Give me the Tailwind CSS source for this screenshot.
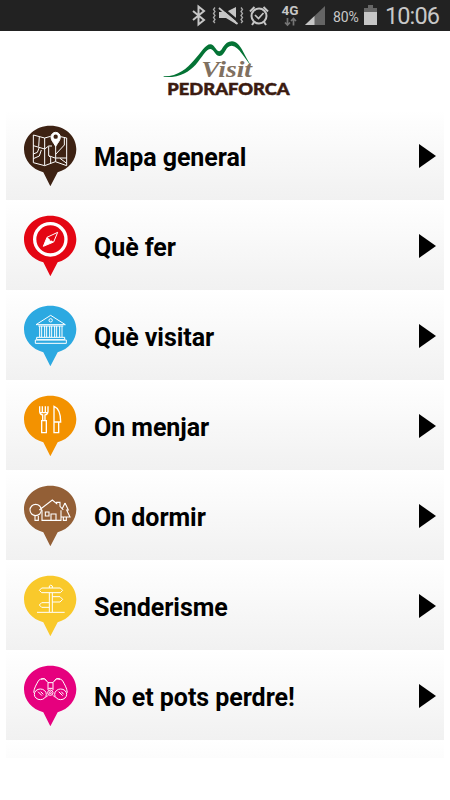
<!DOCTYPE html>
<html lang="ca">
<head>
  <meta charset="UTF-8" />
  <meta name="viewport" content="width=device-width, initial-scale=1.0" />
  <title>Visit Pedraforca</title>
  <script src="https://cdn.jsdelivr.net/npm/@tailwindcss/browser@4"></script>
</head>
<body class="h-screen overflow-hidden bg-white font-[Roboto,sans-serif] text-black">
  <!-- Status bar -->
  <header class="flex h-[31px] items-center bg-[#222222] pl-[190px] text-[#c8c8c8]">
    <svg class="h-[31px] w-[140px] shrink-0" viewBox="190 0 140 31" fill="none" stroke="#c6c6c6">
      <path d="M193 11l11 9-5.500 4.500v-18l5.500 4.500-11 9" stroke-width="2" />
      <path d="M215 7.500l-1.500 2 1.500 2-1.500 2 1.500 2-1.500 2 1.500 2-1.500 2 1.500 1.500M241 7.500l1.500 2-1.500 2 1.500 2-1.500 2 1.500 2-1.500 2 1.500 2-1.500 1.500" stroke="#aaaaaa" stroke-width="1.300" />
      <path d="M219 12h7l10-5v17l-10-6h-7z" fill="#c6c6c6" stroke="none" />
      <path d="M221 7l18 15" stroke="#222222" stroke-width="2.500" />
      <path d="M219 8l18.500 16" stroke-width="1.800" />
      <circle cx="259" cy="16" r="7.500" stroke-width="2" />
      <path d="M250 11.500l4.500-4.500M268 11.500l-4.500-4.500M254 22l-2 3M264 22l2 3" stroke-width="2" />
      <path d="M255 15l3.500 3.500 5-5.500" stroke-width="1.700" />
      <text x="281.500" y="14.500" font-size="13.500" font-weight="700" textLength="17" lengthAdjust="spacingAndGlyphs" fill="#c6c6c6" stroke="none">4G</text>
      <path d="M287.500 18v7M285 22.500l2.500 2.500 2.500-2.500M293.500 25.500v-7M291 21l2.500-2.500 2.500 2.500" stroke="#757575" stroke-width="1.700" />
      <path d="M325 6v19h-20z" fill="#656565" stroke="none" />
      <path d="M314.500 16v9h-9.500z" fill="#c6c6c6" stroke="none" />
    </svg>
    <span class="ml-[3px] w-[28px] pt-[3px] text-[14px] tracking-[-0.1px] whitespace-nowrap">80%</span>
    <svg class="ml-[3px] h-[31px] w-[13px] shrink-0" viewBox="0 0 13 31">
      <path d="M4 5h5v3h4v4h-13v-4h4z" fill="#666666" />
      <path d="M0 12h13v13h-13z" fill="#c6c6c6" />
    </svg>
    <span class="ml-[8px] pt-[3px] text-[23.500px] leading-none tracking-[-0.9px] whitespace-nowrap">10:06</span>
  </header>

  <!-- Logo -->
  <div class="flex h-[79px] pl-[155px]">
    <svg class="mt-px h-[70px] w-[145px]" viewBox="0 0 435 210">
      <path d="M26 133C69 134 95 110 117 85C139 61 151 37 166 37C179 37 181 55 192 58C202 60 205 28 231 28C257 28 267 72 289 101C268 80 253 43 230 41C211 41 211 70 194 72C180 72 177 52 167 51C153 51 143 74 122 98C101 120 74 138 26 135Z" fill="#047335" />
      <text x="139" y="134" font-family="Liberation Serif" font-size="72" font-weight="700" font-style="italic" textLength="152" lengthAdjust="spacingAndGlyphs" fill="#807060">Visit</text>
      <text x="37" y="190" font-family="Lato" font-size="50" font-weight="900" textLength="367" lengthAdjust="spacingAndGlyphs" fill="#3b1b10" stroke="#3b1b10" stroke-width="1.500">PEDRAFORCA</text>
    </svg>
  </div>

  <!-- Menu -->
  <main class="mx-[6px] text-[25px] font-bold tracking-[-0.05px]">
    <a class="flex h-[90px] items-center bg-linear-to-b from-white to-[#f1f1f1] pr-[8px]">
      <svg class="mt-[2px] ml-[17px] h-[62px] w-[55px]" viewBox="69 45 165 186" fill="none" stroke="white" stroke-width="3">
        <path d="M151 47C195 47 229 78 229 118C229 151 206 178 173 187L151 229L130 187C96 178 72 151 72 118C72 78 107 47 151 47Z" fill="#3d2213" stroke="none" />
        <path d="M152 79L134 84L100 75V158L134 167L166 155L200 167V84L182 80M134 84V167M100 107L134 117L146 108H156M118 80L116 110M100 146L118 138L124 120M100 132L112 127L118 112M146 109V137L152 143V160M146 137L165 144M167 102V155M167 144H200M167 133L193 105V84M180 145L200 160" />
        <path d="M167 109C160 97 153 91 153 81A14 14 0 0 1 181 81C181 91 174 97 167 109Z" fill="white" />
        <circle cx="167" cy="80" r="6.500" fill="#3d2213" stroke="none" />
      </svg>
      <span class="ml-[16px] pt-[6px]">Mapa general</span>
      <svg class="mt-[2px] ml-auto h-[26px] w-[17px]" viewBox="0 0 17 26"><path d="M0 1v24l17-12z" /></svg>
    </a>
    <a class="flex h-[90px] items-center bg-linear-to-b from-white to-[#f1f1f1] pr-[8px]">
      <svg class="mt-[2px] ml-[17px] h-[62px] w-[55px]" viewBox="69 45 165 186" fill="none" stroke="white">
        <path d="M151 47C195 47 229 78 229 118C229 151 206 178 173 187L151 229L130 187C96 178 72 151 72 118C72 78 107 47 151 47Z" fill="#e40613" stroke="none" />
        <circle cx="151" cy="118" r="47" stroke-width="10" />
        <path d="M173 97L141 112L130 139L161 126Z" stroke-width="3" />
        <path d="M130 139L141 112L161 126Z" fill="white" stroke="none" />
        <circle cx="152" cy="119" r="3" fill="#e40613" stroke="none" />
      </svg>
      <span class="ml-[16px] pt-[6px]">Què fer</span>
      <svg class="mt-[2px] ml-auto h-[26px] w-[17px]" viewBox="0 0 17 26"><path d="M0 1v24l17-12z" /></svg>
    </a>
    <a class="flex h-[90px] items-center bg-linear-to-b from-white to-[#f1f1f1] pr-[8px]">
      <svg class="mt-[2px] ml-[17px] h-[62px] w-[55px]" viewBox="69 45 165 186" fill="none" stroke="white" stroke-width="3">
        <path d="M151 47C195 47 229 78 229 118C229 151 206 178 173 187L151 229L130 187C96 178 72 151 72 118C72 78 107 47 151 47Z" fill="#2ca9e1" stroke="none" />
        <path d="M108 104L152 76L196 104ZM115 108H190M119 108V141M125 108V141M134 108V141M140 108V141M149 108V141M155 108V141M164 108V141M170 108V141M179 108V141M186 108V141M110 142H194V149H110ZM106 150H199V160H106Z" />
        <circle cx="152" cy="91" r="5" />
      </svg>
      <span class="ml-[16px] pt-[6px]">Què visitar</span>
      <svg class="mt-[2px] ml-auto h-[26px] w-[17px]" viewBox="0 0 17 26"><path d="M0 1v24l17-12z" /></svg>
    </a>
    <a class="flex h-[90px] items-center bg-linear-to-b from-white to-[#f1f1f1] pr-[8px]">
      <svg class="mt-[2px] ml-[17px] h-[62px] w-[55px]" viewBox="69 45 165 186" fill="none" stroke="white" stroke-width="4">
        <path d="M151 47C195 47 229 78 229 118C229 151 206 178 173 187L151 229L130 187C96 178 72 151 72 118C72 78 107 47 151 47Z" fill="#f39200" stroke="none" />
        <path d="M119 79V95Q120 104 128 105V121M144 79V95Q143 104 135 105V121M127 79V98M136 79V98M120 98H143" />
        <path d="M125 122H139V158H125ZM162 79V158H176V126H182C182 103 178 85 162 79ZM162 126H176" />
      </svg>
      <span class="ml-[16px] pt-[6px]">On menjar</span>
      <svg class="mt-[2px] ml-auto h-[26px] w-[17px]" viewBox="0 0 17 26"><path d="M0 1v24l17-12z" /></svg>
    </a>
    <a class="flex h-[90px] items-center bg-linear-to-b from-white to-[#f1f1f1] pr-[8px]">
      <svg class="mt-[2px] ml-[17px] h-[62px] w-[55px]" viewBox="69 45 165 186" fill="none" stroke="white" stroke-width="3.300">
        <path d="M151 47C195 47 229 78 229 118C229 151 206 178 173 187L151 229L130 187C96 178 72 151 72 118C72 78 107 47 151 47Z" fill="#935f36" stroke="none" />
        <circle cx="107" cy="120" r="17" />
        <path d="M105 138V151H115V138M126 119V151H183V121M118 120L157 90L170 101V97H180V109L190 120M153 151V132H168V151M136 126H147V138H136ZM195 99L186 118M195 99L205 120H200L210 141H184M190 142V151H199V142" />
      </svg>
      <span class="ml-[16px] pt-[6px]">On dormir</span>
      <svg class="mt-[2px] ml-auto h-[26px] w-[17px]" viewBox="0 0 17 26"><path d="M0 1v24l17-12z" /></svg>
    </a>
    <a class="flex h-[90px] items-center bg-linear-to-b from-white to-[#f1f1f1] pr-[8px]">
      <svg class="mt-[2px] ml-[17px] h-[62px] w-[55px]" viewBox="69 45 165 186" fill="none" stroke="white" stroke-width="3">
        <path d="M151 47C195 47 229 78 229 118C229 151 206 178 173 187L151 229L130 187C96 178 72 151 72 118C72 78 107 47 151 47Z" fill="#f9c92b" stroke="none" />
        <path d="M148 84V78Q152 73 157 78V84M125 84H181L188 91L181 98H125L118 91ZM148 98V156M157 98V156M157 110H180L188 118L180 126H157M148 128H125L118 135L125 142H148M111 157H194" />
      </svg>
      <span class="ml-[16px] pt-[6px]">Senderisme</span>
      <svg class="mt-[2px] ml-auto h-[26px] w-[17px]" viewBox="0 0 17 26"><path d="M0 1v24l17-12z" /></svg>
    </a>
    <a class="flex h-[90px] items-center bg-linear-to-b from-white to-[#f1f1f1] pr-[8px]">
      <svg class="mt-[2px] ml-[17px] h-[62px] w-[55px]" viewBox="69 45 165 186" fill="none" stroke="white" stroke-width="3">
        <path d="M151 47C195 47 229 78 229 118C229 151 206 178 173 187L151 229L130 187C96 178 72 151 72 118C72 78 107 47 151 47Z" fill="#e6007e" stroke="none" />
        <ellipse cx="121" cy="133" rx="18" ry="16" />
        <ellipse cx="182" cy="133" rx="18" ry="16" />
        <circle cx="151" cy="128" r="8" />
        <circle cx="151" cy="128" r="3" />
        <path d="M101 128C102 114 110 102 116 91Q130 80 139 91L144 98V120M202 128C201 114 193 102 187 91Q173 80 164 91L159 98V120M123 88Q134 82 140 93M180 88Q169 82 163 93M144 98H159M145 115H158M144 136L138 142M159 136L165 142M114 125L126 137M122 125L130 133M176 125L188 137M184 125L191 133" />
      </svg>
      <span class="ml-[16px] pt-[6px]">No et pots perdre!</span>
      <svg class="mt-[2px] ml-auto h-[26px] w-[17px]" viewBox="0 0 17 26"><path d="M0 1v24l17-12z" /></svg>
    </a>
    <div class="h-[18px] bg-linear-to-b from-white to-[#fcfcfc]"></div>
  </main>
</body>
</html>
